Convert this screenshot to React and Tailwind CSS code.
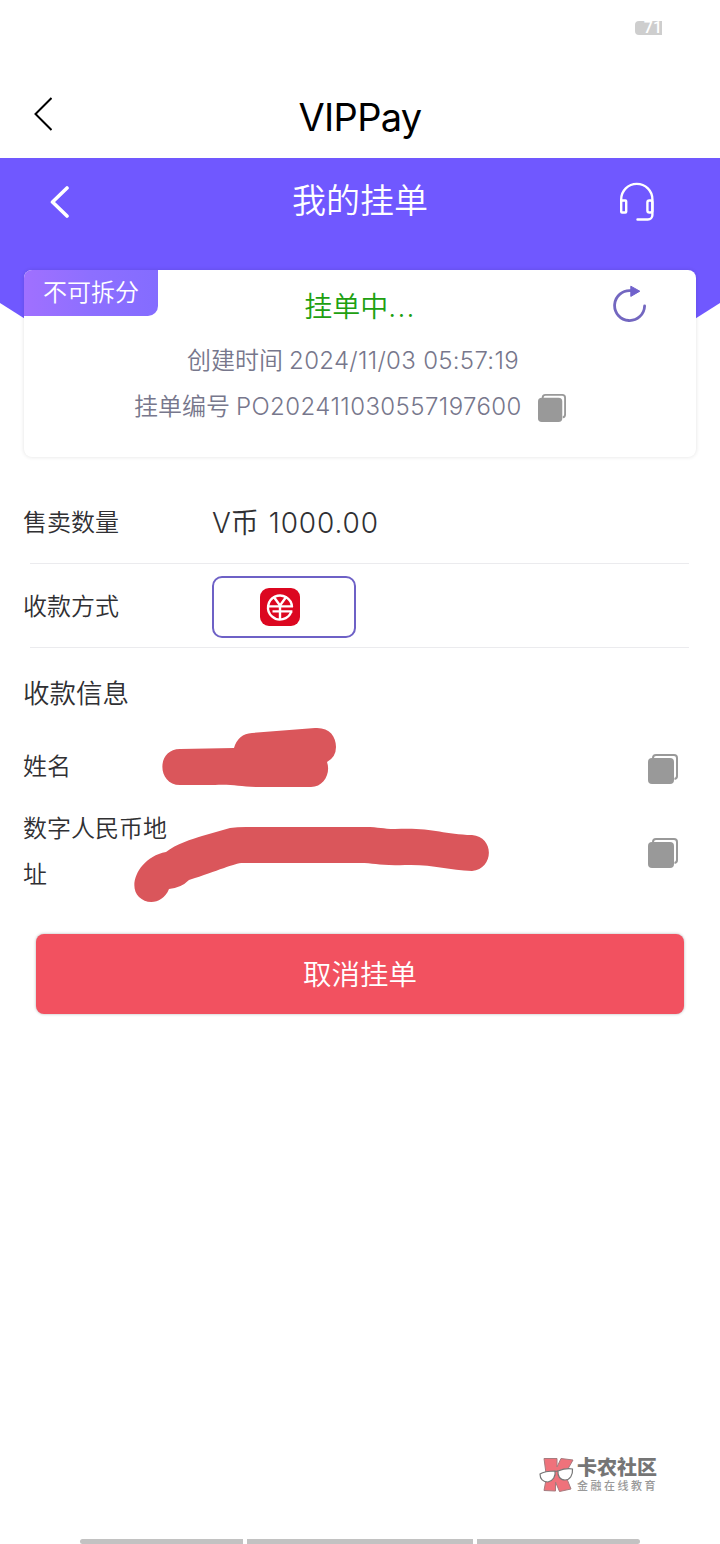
import React from "react";

const CopyIcon = ({ className }) => (
    <svg viewBox="0 0 30 30" className={className} fill="none">
        <path d="M5 4.5V4a3 3 0 0 1 3-3h18a3 3 0 0 1 3 3v18a3 3 0 0 1-2.5 3" stroke="#999" strokeWidth="2" />
        <rect x="0" y="4" width="26" height="26" rx="4" fill="#999" />
    </svg>
);

const HeadsetIcon = () => (
    <svg width="36" height="40" viewBox="0 0 36 40" fill="none" stroke="#fff" strokeWidth="2.4" strokeLinecap="round" strokeLinejoin="round">
        <path d="M2.2 19v-1.5a15.6 15.6 0 0 1 31.2 0V33a4.5 4.5 0 0 1-4.5 4.5H18.5" />
        <rect x="2.2" y="18.5" width="5" height="12" rx="0.8" />
        <rect x="28.4" y="18.5" width="5" height="12" rx="2" />
    </svg>
);

const RefreshIcon = () => (
    <svg width="36" height="38" viewBox="0 0 36 38" fill="none">
        <path d="M19 6.6A15 15 0 1 0 32.6 22" stroke="#7367c0" strokeWidth="2.8" strokeLinecap="round" />
        <path d="M18.8 2.2v10.2l9-5.2z" fill="#7061cc" stroke="#7061cc" strokeLinejoin="round" />
    </svg>
);

// digital RMB badge
const RmbIcon = () => (
    <svg width="40" height="38" viewBox="0 0 40 38" fill="none">
        <rect width="40" height="38" rx="9" fill="#dc0720" />
        <g stroke="#fff" strokeWidth="2.4">
            <path d="M31.3 23.6A12 12 0 1 1 32 19" />
            <path d="M13.5 8.5L20 17.5L26.5 8.5M20 17.5V31M7.8 18.4H33M12.5 23.4H32.4" />
        </g>
    </svg>
);

const CommunityLogo = () => (
    <svg width="35" height="36" viewBox="0 0 35 36" fill="none">
        <path d="M5 1.5H18V10L22 1.5L34 3L26 17L32 32L20.5 34.5L16.5 25V34L5 33.5L7.5 20Z" fill="#ef727b" stroke="#a67b7e" strokeWidth="1" />
        <path d="M1 17C4 15 11 14 16 14C17 19 14 24 9 25C4 25 1 22 1 17Z" fill="#fff" stroke="#777" strokeWidth="1.2" />
        <path d="M19 14C24 12 29 11 33.5 12C34 18 31 23 26 23C21 23 18.5 19 19 14Z" fill="#fff" stroke="#777" strokeWidth="1.2" />
        <path d="M16 14.5L19 14" stroke="#777" strokeWidth="1.2" />
    </svg>
);

const Row = ({ label, children }) => (
    <div className="flex h-[84px] items-center pl-[23px]">
        <span className="w-[189px]">{label}</span>
        {children}
    </div>
);

const Divider = () => <div className="-mt-0.5 mb-px ml-[30px] mr-[31px] h-px bg-[#ebebee]" />;

export default function App() {
    return (
        <div className="flex h-[1544px] w-[720px] flex-col overflow-hidden bg-white font-['Inter','Noto_Sans_CJK_SC',sans-serif] text-2xl font-[350] leading-none text-[#303033]">
            {/* Status bar */}
            <div className="flex h-[72px] items-start justify-end pr-[58px] pt-[21px]">
                <div className="flex h-3.5 w-[27px] items-center justify-end rounded-l bg-[#cecece] font-['Roboto'] text-base font-medium text-white">
                    71
                </div>
            </div>

            {/* App bar */}
            <div className="flex h-[86px] items-center pl-[34px] pr-[52px] text-black">
                <svg width="18" height="34" viewBox="0 0 18 34" fill="none" stroke="#000" strokeWidth="2" className="-mt-0.5">
                    <path d="M17.5 1L1.5 17L17.5 33" />
                </svg>
                <h1 className="flex-1 pt-[3px] text-center font-['Inter'] text-[38px] font-normal tracking-[-0.7px]">VIPPay</h1>
            </div>

            {/* Purple header, lower corners cut behind the card */}
            <div className="h-[164px] shrink-0 bg-[#7058ff] [clip-path:polygon(0_0,100%_0,100%_145px,calc(100%-30px)_100%,30px_100%,0_145px)]">
                <div className="flex h-[88px] items-center justify-between pl-[50px] pr-[65px]">
                    <svg width="20" height="34" viewBox="0 0 20 34" fill="none" stroke="#fff" strokeWidth="3.6" strokeLinecap="round" strokeLinejoin="round">
                        <path d="M17 3L2.5 17L17 31" />
                    </svg>
                    <h2 className="-mt-0.5 pl-[31px] text-[34px] font-[350] text-white">我的挂单</h2>
                    <HeadsetIcon />
                </div>
            </div>

            {/* Order card */}
            <div className="relative mx-6 -mt-[52px] h-[187px] shrink-0 rounded-lg bg-white shadow-[0_0_4px_rgba(0,0,0,0.12)]">
                <div className="grid h-[68px] grid-cols-[134px_1fr_134px]">
                    <div className="flex h-[46px] items-center justify-center rounded-br-[10px] rounded-tl-lg bg-gradient-to-r from-[#a070ff] via-[#8d6fff] to-[#846cff] text-white">
                        不可拆分
                    </div>
                    <div className="pt-[23px] text-center text-[28px] text-[#20a010]">
                        挂单中<span className="tracking-[1.2px]">...</span>
                    </div>
                    <div className="flex items-start justify-end pr-12 pt-3.5">
                        <RefreshIcon />
                    </div>
                </div>
                <div className="flex h-[46px] items-center justify-center gap-1.5 pr-3.5 text-[#77778c]">
                    <span>创建时间</span>
                    <span className="tracking-[0.3px]">2024/11/03 05:57:19</span>
                </div>
                <div className="flex h-[46px] items-center pl-[110px] text-[#77778c]">
                    <span>挂单编号</span>
                    <span className="ml-1.5 tracking-[0.42px]">PO202411030557197600</span>
                    <CopyIcon className="ml-4 mt-0.5 size-7" />
                </div>
            </div>

            <div className="mt-6">
                <Row label="售卖数量">
                    <span className="text-[28px]">
                        V币 <span className="ml-0.5 tracking-[0.9px]">1000.00</span>
                    </span>
                </Row>
                <Divider />
                <Row label="收款方式">
                    <div className="flex h-[62px] w-36 items-center justify-center rounded-[10px] border-2 border-[#6e61c6] pr-2">
                        <RmbIcon />
                    </div>
                </Row>
                <Divider />
            </div>

            <h3 className="mt-[31px] pl-[23px] text-[26.5px] font-[350]">收款信息</h3>

            {/* Payee details with hidden values */}
            <div className="mt-[15px] flex h-[188px]">
                <div className="flex w-[133px] shrink-0 flex-col pl-[23px] pt-6">
                    <span className="h-[39px] pt-[9px]">姓名</span>
                    <div className="mt-[21px] w-36 leading-[46px]">数字人民币地址</div>
                </div>
                <svg width="360" height="188" viewBox="130 722 360 188" fill="#da565b" className="-ml-[3px]">
                    <path d="M180 749L234 748Q238 734 252 733L315 728C329 727 336 736 336 747Q336 757 327 762C331 773 324 787 311 787H261C240 787 233 784 215 785H180C157 785 156 749 180 749Z" />
                    <path d="M166 852C176 844 192 839 202 836L230 828Q237 827 246 827H365C380 827 382 829 395 829C430 827 442 834 472 835C495 837 494 869 472 871C448 870 432 864 405 865C379 866 375 863 360 863H243C234 863 218 871 189 880Q181 888 169 889C163 904 147 905 139 897C127 886 139 857 166 852Z" />
                </svg>
                <div className="ml-auto flex flex-col gap-[54px] pr-[42px] pt-8">
                    <CopyIcon className="size-[30px]" />
                    <CopyIcon className="size-[30px]" />
                </div>
            </div>

            <button className="mx-9 mt-6 h-20 shrink-0 rounded-lg bg-[#f25160] pt-[3px] text-[28.5px] font-[350] text-white shadow-[0_0_3px_rgba(0,0,0,0.3)]">
                取消挂单
            </button>

            {/* Community mark */}
            <div className="mr-[62px] mt-auto flex items-center justify-end gap-[3px]">
                <CommunityLogo />
                <div>
                    <div className="text-[20px] font-black leading-5 text-[#757575]">卡农社区</div>
                    <div className="mt-0.5 text-[11px] font-medium leading-[13px] tracking-[2.5px] text-[#999]">金融在线教育</div>
                </div>
            </div>

            {/* Gesture bar */}
            <div className="mt-[46px] flex h-[5px] shrink-0 justify-center gap-1">
                <div className="w-[163px] rounded-l-full bg-[#c2c2c2]" />
                <div className="w-[226px] bg-[#c2c2c2]" />
                <div className="w-[163px] rounded-r-full bg-[#c2c2c2]" />
            </div>
        </div>
    );
}
